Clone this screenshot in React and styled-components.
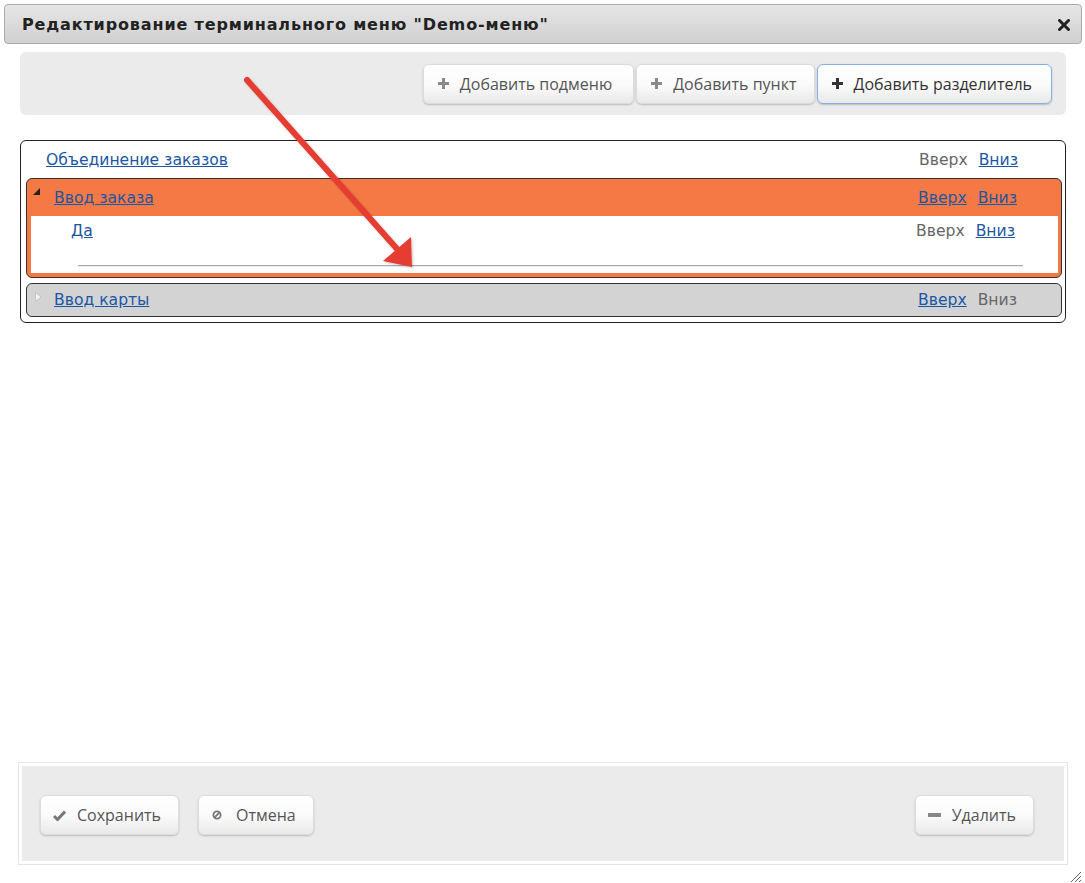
import React from "react";
import styled, { createGlobalStyle, css } from "styled-components";

const Global = createGlobalStyle`
  html, body { margin: 0; padding: 0; background: #fff; }
  body { font-family: "Open Sans", "Liberation Sans", sans-serif; }
`;

const Page = styled.div`
  position: relative;
  width: 1085px;
  height: 883px;
  display: flex;
  flex-direction: column;
  box-sizing: border-box;
  overflow: hidden;
`;

const TitleBar = styled.div`
  margin: 4px 3px 0 4px;
  height: 38px;
  border: 1px solid #aaa;
  border-radius: 4px;
  background: linear-gradient(#e6e6e6, #d0d0d0);
  display: flex;
  align-items: center;
  justify-content: space-between;
  padding: 0 10px 0 17px;
`;

const Title = styled.div`
  font-family: "DejaVu Sans", Verdana, sans-serif;
  font-weight: bold;
  font-size: 16px;
  color: #222;
  letter-spacing: 0.86px;
`;

const CloseBtn = styled.div`
  width: 14px;
  height: 14px;
  display: flex;
  align-items: center;
  justify-content: center;
  margin-top: 2px;
`;

const Content = styled.div`
  padding: 8px 19px 0 20px;
`;

const Toolbar = styled.div`
  height: 63px;
  background: #ebebeb;
  border-radius: 6px;
  display: flex;
  justify-content: flex-end;
  align-items: center;
  gap: 2px;
  padding-right: 14px;
`;

const Button = styled.button`
  height: 40px;
  box-sizing: border-box;
  border: 1px solid #dcdcdc;
  border-radius: 6px;
  background: linear-gradient(#ffffff 0%, #fbfbfb 50%, #e9e9e9 100%);
  box-shadow: 0 1px 2px rgba(0, 0, 0, 0.22);
  font-family: "Open Sans", "Liberation Sans", sans-serif;
  font-size: 16px;
  color: #555;
  display: flex;
  align-items: center;
  gap: 11px;
  padding: 0 17px 0 12px;
  cursor: pointer;
  ${(p) =>
    p.$focused &&
    css`
      border-color: #86aee8;
      color: #333;
    `}
`;

const ToolButton = styled(Button)`
  padding: 0 ${(p) => p.$pr || 18}px 0 14px;
`;

const Tree = styled.div`
  margin-top: 25px;
  border: 1px solid #222;
  border-radius: 6px;
  padding: 0 3px 5px 5px;
`;

const Row = styled.div`
  display: flex;
  align-items: center;
  justify-content: space-between;
  height: ${(p) => p.$h}px;
  padding-left: ${(p) => p.$pl}px;
  padding-right: ${(p) => p.$pr}px;
`;

const ItemText = styled.a`
  font-family: "DejaVu Sans", Verdana, sans-serif;
  font-size: 15.6px;
  color: #1b57a3;
  text-decoration: underline;
  cursor: pointer;
`;

const Actions = styled.div`
  display: flex;
  gap: 11px;
  font-family: "DejaVu Sans", Verdana, sans-serif;
  font-size: 15.6px;
`;

const Action = styled.span`
  color: ${(p) => (p.$link ? "#1b57a3" : "#666")};
  text-decoration: ${(p) => (p.$link ? "underline" : "none")};
  cursor: ${(p) => (p.$link ? "pointer" : "default")};
`;

const Group = styled.div`
  border: 1px solid #333;
  border-radius: 6px;
  background: ${(p) => p.$bg};
  margin-top: ${(p) => p.$mt}px;
  padding: ${(p) => (p.$open ? "0 3px 4px 4px" : "0")};
`;

const GroupHeader = styled.div`
  position: relative;
  display: flex;
  align-items: center;
  justify-content: space-between;
  height: ${(p) => p.$h}px;
  padding-left: ${(p) => p.$pl}px;
  padding-right: ${(p) => p.$pr}px;
`;

const Toggle = styled.span`
  position: absolute;
  left: ${(p) => p.$l}px;
  top: ${(p) => p.$t}px;
  display: flex;
`;

const GroupBody = styled.div`
  background: #fff;
`;

const SeparatorRow = styled.div`
  height: 21px;
  display: flex;
  align-items: flex-end;
  padding: 0 35px 6px 47px;
`;

const SeparatorLine = styled.div`
  flex: 1;
  height: 1px;
  background: #a8a8a8;
  border-bottom: 1px solid #eee;
`;

const Spacer = styled.div`
  flex: 1;
`;

const Footer = styled.div`
  margin: 0 17px 18px 18px;
  height: 98px;
  border: 1px solid #e4e4e4;
  background: #ebebeb;
  box-shadow: inset 0 0 0 3px #fff;
  display: flex;
  align-items: center;
  padding: 3px 33px 0 21px;
`;

const FooterLeft = styled.div`
  display: flex;
  gap: 19px;
  flex: 1;
`;

const Resize = styled.div`
  position: absolute;
  right: 3px;
  bottom: 3px;
  width: 14px;
  height: 14px;
`;

const Overlay = styled.svg`
  position: absolute;
  left: 0;
  top: 0;
  pointer-events: none;
`;

const PlusIcon = ({ color = "#8a8a8a" }) => (
  <svg width="11" height="11" viewBox="0 0 11 11">
    <rect x="4" y="0" width="3" height="11" fill={color} />
    <rect x="0" y="4" width="11" height="3" fill={color} />
  </svg>
);

const CheckIcon = () => (
  <svg width="13" height="11" viewBox="0 0 13 11">
    <path d="M1 6 L4.5 9.5 L12 1.5" stroke="#777" strokeWidth="3" fill="none" />
  </svg>
);

const CancelIcon = () => (
  <svg width="14" height="10" viewBox="0 0 14 10">
    <circle cx="6" cy="5" r="3.6" stroke="#777" strokeWidth="1.8" fill="none" />
    <line x1="3.4" y1="7.6" x2="8.6" y2="2.4" stroke="#777" strokeWidth="1.8" />
  </svg>
);

const MinusIcon = () => (
  <svg width="13" height="4" viewBox="0 0 13 4">
    <rect x="0" y="0" width="13" height="4" fill="#888" />
  </svg>
);

export default function App() {
  return (
    <Page>
      <Global />
      <TitleBar>
        <Title>Редактирование терминального меню "Demo-меню"</Title>
        <CloseBtn>
          <svg width="12" height="12" viewBox="0 0 12 12">
            <path d="M1.5 1.5 L10.5 10.5 M10.5 1.5 L1.5 10.5" stroke="#222" strokeWidth="3" strokeLinecap="round" />
          </svg>
        </CloseBtn>
      </TitleBar>
      <Content>
        <Toolbar>
          <ToolButton $pr={21}>
            <PlusIcon />
            Добавить подменю
          </ToolButton>
          <ToolButton $pr={17}>
            <PlusIcon />
            Добавить пункт
          </ToolButton>
          <ToolButton $focused $pr={19}>
            <PlusIcon color="#333" />
            Добавить разделитель
          </ToolButton>
        </Toolbar>
        <Tree>
          <Row $h={37} $pl={20} $pr={44}>
            <ItemText>Объединение заказов</ItemText>
            <Actions>
              <Action>Вверх</Action>
              <Action $link>Вниз</Action>
            </Actions>
          </Row>
          <Group $bg="#f57945" $mt={0} $open>
            <GroupHeader $h={37} $pl={23} $pr={41}>
              <Toggle $l={2} $t={9}>
                <svg width="7" height="7" viewBox="0 0 7 7">
                  <path d="M7 0 L7 7 L0 7 Z" fill="#222" />
                </svg>
              </Toggle>
              <ItemText>Ввод заказа</ItemText>
              <Actions>
                <Action $link>Вверх</Action>
                <Action $link>Вниз</Action>
              </Actions>
            </GroupHeader>
            <GroupBody>
              <Row $h={30} $pl={40} $pr={43}>
                <ItemText>Да</ItemText>
                <Actions>
                  <Action>Вверх</Action>
                  <Action $link>Вниз</Action>
                </Actions>
              </Row>
              <SeparatorRow>
                <SeparatorLine />
              </SeparatorRow>
            </GroupBody>
          </Group>
          <Group $bg="#d3d3d3" $mt={5}>
            <GroupHeader $h={32} $pl={27} $pr={44}>
              <Toggle $l={8} $t={8}>
                <svg width="7" height="10" viewBox="0 0 7 10">
                  <path d="M0.5 0.8 L6.2 5 L0.5 9.2 Z" fill="#f4f4f4" stroke="#bdbdbd" strokeWidth="0.8" />
                </svg>
              </Toggle>
              <ItemText>Ввод карты</ItemText>
              <Actions>
                <Action $link>Вверх</Action>
                <Action>Вниз</Action>
              </Actions>
            </GroupHeader>
          </Group>
        </Tree>
      </Content>
      <Spacer />
      <Footer>
        <FooterLeft>
          <Button>
            <CheckIcon />
            Сохранить
          </Button>
          <Button>
            <CancelIcon />
            Отмена
          </Button>
        </FooterLeft>
        <Button>
          <MinusIcon />
          Удалить
        </Button>
      </Footer>
      <Resize>
        <svg width="14" height="14" viewBox="0 0 14 14">
          <path d="M13 3 L3 13 M13 7 L7 13 M13 11 L11 13" stroke="#666" strokeWidth="1" />
        </svg>
      </Resize>
      <Overlay width="1085" height="883" viewBox="0 0 1085 883">
        <defs>
          <filter id="sh" x="-10%" y="-10%" width="130%" height="130%">
            <feDropShadow dx="1" dy="1" stdDeviation="1" floodColor="#000" floodOpacity="0.25" />
          </filter>
        </defs>
        <g filter="url(#sh)">
          <line x1="247" y1="80" x2="398" y2="250" stroke="#e53d31" strokeWidth="6" strokeLinecap="round" />
          <path d="M412 267 L383 261 L411 237 Z" fill="#e53d31" />
        </g>
      </Overlay>
    </Page>
  );
}
